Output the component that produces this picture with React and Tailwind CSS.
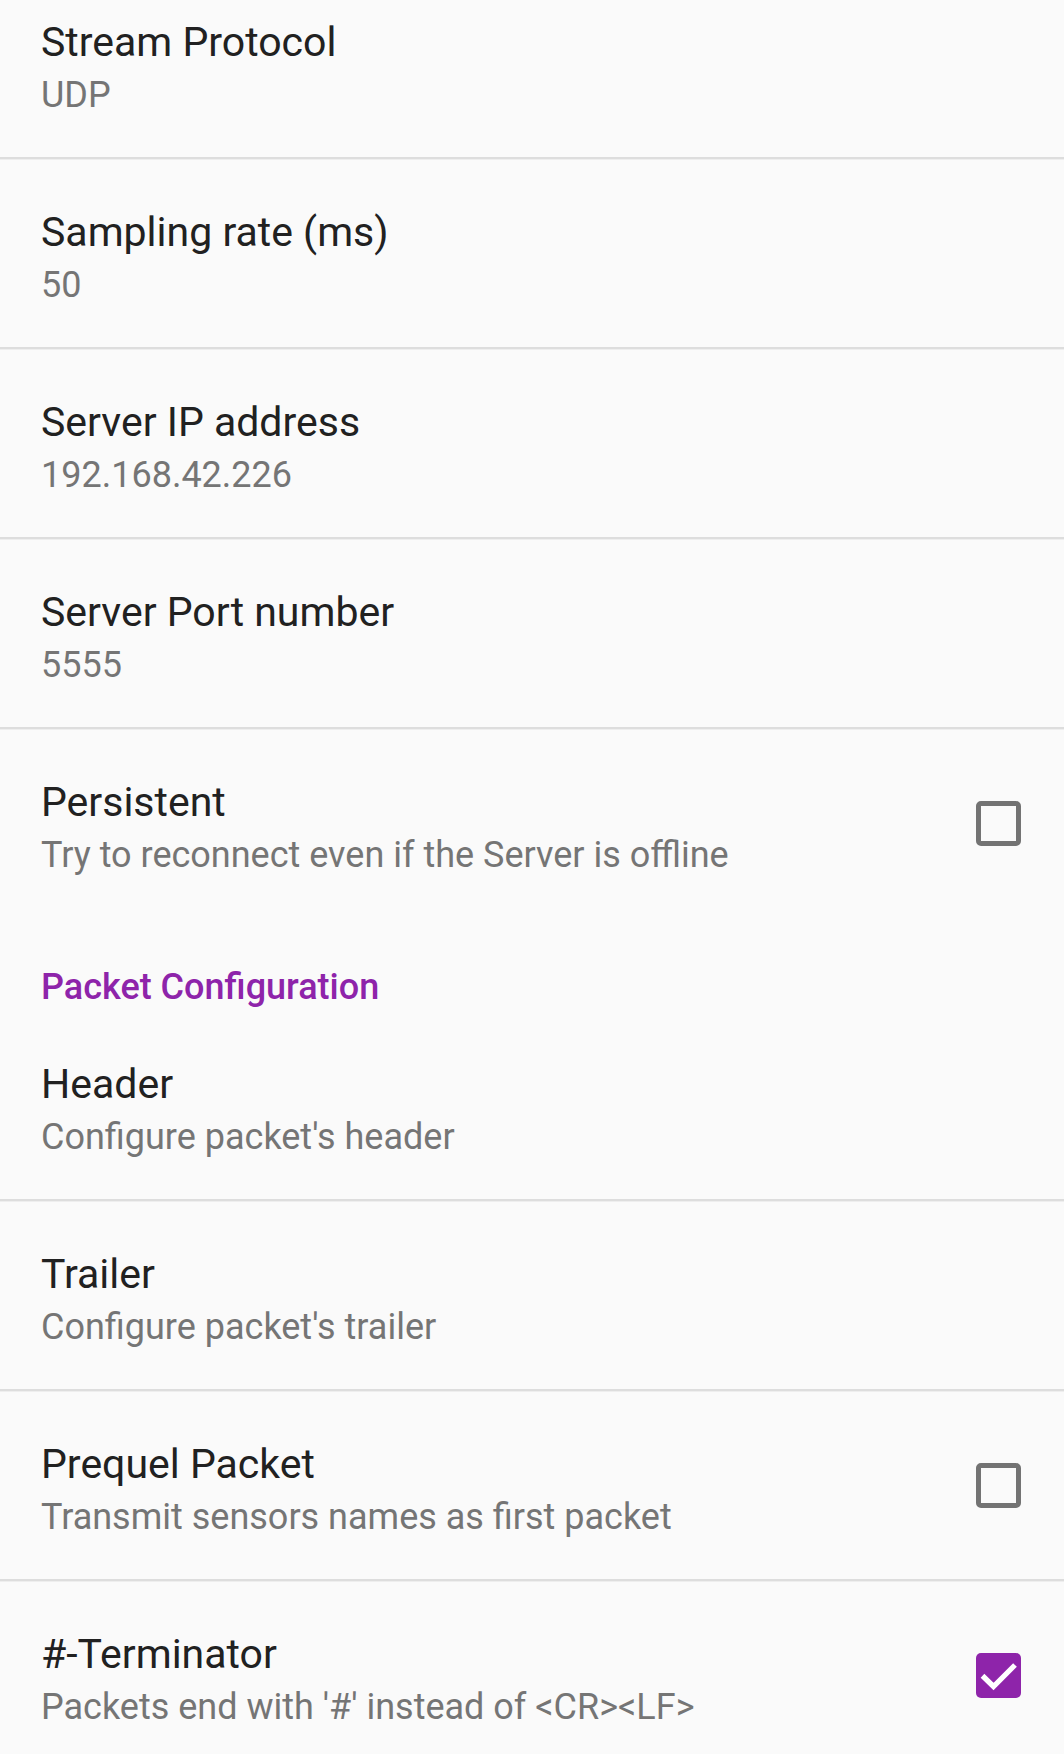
import React from "react";

function Checkbox({ checked }) {
  if (checked) {
    return (
      <div className="w-[45px] h-[45px] rounded-[5px] bg-[#8e24aa] flex items-center justify-center">
        <svg width="45" height="45" viewBox="0 0 18 18">
          <polyline points="2.6,9.1 7,13.4 15.6,4.8" fill="none" stroke="#ffffff" strokeWidth="2.1" />
        </svg>
      </div>
    );
  }
  return <div className="w-[45px] h-[45px] rounded-[5px] border-[5px] border-[#737373]" />;
}

function Divider() {
  return <div className="h-[3px] bg-[#dddddd] border-b border-[#eeeeee]" />;
}

function Row({ title, summary, checkbox, first }) {
  return (
    <div className={"flex items-start pl-[41px] pr-[43px] " + (first ? "h-[157px] pt-[18px]" : "h-[187px] pt-[48px]")}>
      <div className="flex-1 min-w-0">
        <div className="text-[41px] leading-[48px] text-[#212121]">{title}</div>
        <div className="mt-[8px] text-[36px] leading-[42px] text-[#757575]">{summary}</div>
      </div>
      {checkbox !== undefined && (
        <div className="mt-[23px]">
          <Checkbox checked={checkbox} />
        </div>
      )}
    </div>
  );
}

export default function App() {
  return (
    <div className="w-[1064px] h-[1754px] overflow-hidden bg-[#fafafa]" style={{ fontFamily: "Roboto, 'Noto Sans', sans-serif" }}>
      <Row first title="Stream Protocol" summary="UDP" />
      <Divider />
      <Row title="Sampling rate (ms)" summary="50" />
      <Divider />
      <Row title="Server IP address" summary="192.168.42.226" />
      <Divider />
      <Row title="Server Port number" summary="5555" />
      <Divider />
      <Row title="Persistent" summary="Try to reconnect even if the Server is offline" checkbox={false} />
      <div className="h-[95px] pt-[49px] pl-[41px]">
        <div className="text-[36px] leading-[42px] font-medium text-[#8e24aa]">Packet Configuration</div>
      </div>
      <Row title="Header" summary="Configure packet's header" />
      <Divider />
      <Row title="Trailer" summary="Configure packet's trailer" />
      <Divider />
      <Row title="Prequel Packet" summary="Transmit sensors names as first packet" checkbox={false} />
      <Divider />
      <Row title="#-Terminator" summary="Packets end with '#' instead of <CR><LF>" checkbox={true} />
    </div>
  );
}
